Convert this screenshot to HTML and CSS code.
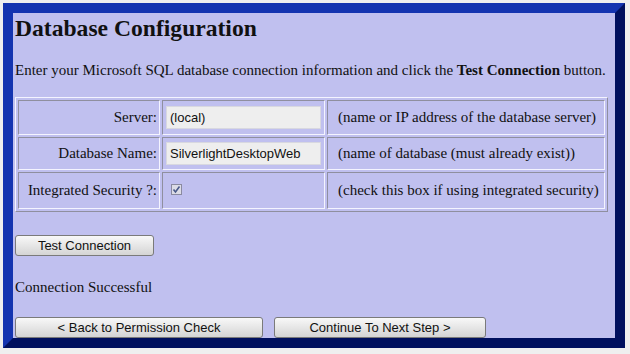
FILE: index.html
```html
<!DOCTYPE html>
<html>
<head>
<meta charset="utf-8">
<link rel="stylesheet" href="styles.css">
</head>
<body>
<div class="frame">
  <h1 class="title">Database Configuration</h1>
  <p class="intro">Enter your Microsoft SQL database connection information and click the <b>Test Connection</b> button.</p>
  <table class="config">
    <tr class="r1">
      <td class="lbl">Server:</td>
      <td class="fld"><input class="txt" type="text" value="(local)"></td>
      <td class="hint">(name or IP address of the database server)</td>
    </tr>
    <tr class="r2">
      <td class="lbl">Database Name:</td>
      <td class="fld"><input class="txt" type="text" value="SilverlightDesktopWeb"></td>
      <td class="hint">(name of database (must already exist))</td>
    </tr>
    <tr class="r3">
      <td class="lbl">Integrated Security ?:</td>
      <td class="fld"><span class="chk"><svg width="11" height="11" viewBox="0 0 11 11"><path d="M2.5 5.5 L4.5 8 L8.5 2.5" fill="none" stroke="#4a5a8a" stroke-width="1.6"/></svg></span></td>
      <td class="hint">(check this box if using integrated security)</td>
    </tr>
  </table>
  <div class="test-row"><button class="btn btn-test">Test Connection</button></div>
  <p class="status">Connection Successful</p>
  <div class="nav">
    <button class="btn btn-back">&lt; Back to Permission Check</button>
    <button class="btn btn-next">Continue To Next Step &gt;</button>
  </div>
</div>
</body>
</html>
```

FILE: styles.css
```css
html, body {
  margin: 0;
  padding: 0;
  background: #efefef;
}
body {
  padding: 3px 0 0 3px;
  font-family: "Liberation Serif", "Times New Roman", serif;
  color: #111;
}
.frame {
  box-sizing: border-box;
  width: 622px;
  height: 345px;
  border: 10px solid;
  border-color: #1434b0 #00105e #00105e #1434b0;
  background: #c0c0ef;
  padding: 0 0 0 2px;
  overflow: hidden;
}
.title {
  margin: 0;
  font-size: 23.6px;
  font-weight: bold;
  line-height: 28px;
  padding-top: 1px;
}
.intro {
  margin: 20px 0 0 0;
  font-size: 15px;
  line-height: 17px;
  white-space: nowrap;
}
.config {
  margin-top: 18px;
  width: 593px;
  border: 1px solid;
  border-color: #f4f4ff #8f8f9f #8f8f9f #f4f4ff;
  border-spacing: 2px;
  font-size: 15px;
}
.config td {
  border: 1px solid;
  border-color: #8f8f9f #f4f4ff #f4f4ff #8f8f9f;
  padding: 0 2px;
  vertical-align: middle;
  white-space: nowrap;
}
.r1 td { height: 33px; }
.r2 td { height: 31px; }
.r3 td { height: 35px; }
.lbl {
  width: 136px;
  text-align: right;
}
.fld {
  width: 156px;
  padding-left: 3px !important;
}
.hint {
  padding-left: 10px !important;
}
.txt {
  box-sizing: border-box;
  width: 155px;
  height: 23px;
  margin: 0;
  border: 1px solid #d8d8e0;
  background: #eeeeee;
  font-family: "Liberation Sans", Arial, sans-serif;
  font-size: 13px;
  padding: 0 3px;
  color: #111;
}
.chk {
  display: inline-block;
  box-sizing: border-box;
  width: 11px;
  height: 11px;
  margin-left: 5px;
  border: 1px solid #8a8aa0;
  background: #dcdce6;
  vertical-align: middle;
  position: relative;
  top: -2px;
}
.chk svg {
  display: block;
  margin: -1px;
}
.test-row {
  margin-top: 23px;
  height: 21px;
}
.btn {
  box-sizing: border-box;
  height: 21px;
  margin: 0;
  padding: 0;
  border: 1px solid #7a7a7a;
  border-radius: 3px;
  background: linear-gradient(#f8f8f8, #e6e6e6 50%, #d4d4d4);
  font-family: "Liberation Sans", Arial, sans-serif;
  font-size: 13px;
  color: #111;
}
.btn-test { width: 139px; }
.status {
  margin: 23px 0 0 0;
  font-size: 15px;
  line-height: 17px;
}
.nav {
  margin-top: 21px;
  display: flex;
  gap: 11px;
}
.btn-back { width: 248px; }
.btn-next { width: 212px; }
```
